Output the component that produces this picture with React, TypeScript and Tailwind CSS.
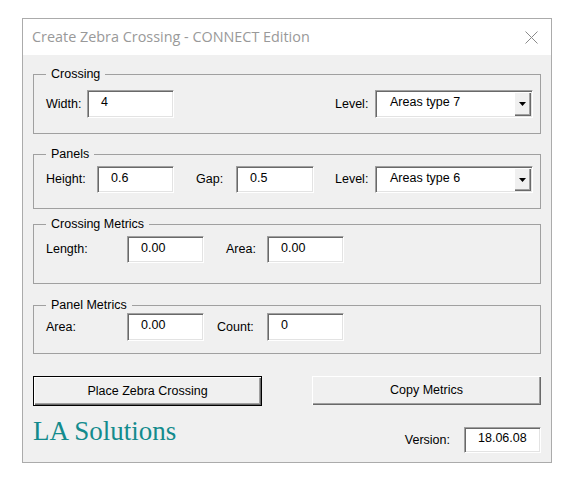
import React from 'react';

// Win32-style sunken edit box
const Field: React.FC<{ value: string; w: string; h?: string }> = ({ value, w, h = 'h-[27px]' }) => (
    <div
        className={`${w} ${h} flex items-center pb-[3px] pl-[13px] bg-white border border-t-[#a0a0a0] border-l-[#a0a0a0] border-r-white border-b-white shadow-[inset_1px_1px_0_#696969,inset_-1px_-1px_0_#e3e3e3]`}
    >
        {value}
    </div>
);

const Combo: React.FC<{ value: string; h?: string }> = ({ value, h = 'h-[27px]' }) => (
    <div
        className={`w-[158px] ${h} flex items-stretch bg-white border border-t-[#a0a0a0] border-l-[#a0a0a0] border-r-white border-b-white shadow-[inset_1px_1px_0_#696969,inset_-1px_-1px_0_#e3e3e3]`}
    >
        <div className="flex-1 flex items-center pb-[3px] pl-[14px]">{value}</div>
        <div className="w-[17px] mt-[1px] mb-[1px] mr-[1px] flex items-center justify-center bg-[#f0f0f0] shadow-[inset_1px_1px_0_#fff,inset_-1px_-1px_0_#696969,inset_-2px_-2px_0_#a0a0a0]">
            <svg width="7" height="4" viewBox="0 0 7 4">
                <polygon points="0,0 7,0 3.5,4" fill="#000" />
            </svg>
        </div>
    </div>
);

const Group: React.FC<{ title: string; className: string; children: React.ReactNode }> = ({ title, className, children }) => (
    <fieldset className={`min-w-0 border border-[#a0a0a0] pl-[12px] pr-[7px] ${className}`}>
        <legend className="px-[5px] leading-[14px]">{title}</legend>
        {children}
    </fieldset>
);

const raised = 'bg-[#f0f0f0] shadow-[inset_1px_1px_0_#fff,inset_-1px_-1px_0_#696969,inset_-2px_-2px_0_#a0a0a0]';

export default function App() {
    return (
        <div className="min-h-screen bg-white pt-[18px] pl-[22px] text-[12.5px] text-black font-['Liberation_Sans',Arial,sans-serif]">
            <div className="w-[530px] border border-[#ababab] bg-[#f0f0f0]">
                {/* title bar */}
                <div className="h-[36px] bg-white flex items-center justify-between pl-[9px] pr-[13px]">
                    <span className="font-['Open_Sans',sans-serif] text-[14.4px] text-[#999999]">
                        Create Zebra Crossing - CONNECT Edition
                    </span>
                    <svg width="13" height="13" viewBox="0 0 13 13" className="mt-[1px]">
                        <path d="M0.5 0.5 L12.5 12.5 M12.5 0.5 L0.5 12.5" stroke="#8a8a8a" strokeWidth="1" />
                    </svg>
                </div>

                {/* body */}
                <div className="h-[407px] px-[10px] pt-[12px]">
                    <Group title="Crossing" className="pt-[9px] pb-[15px]">
                        <div className="flex items-center h-[28px]">
                            <span className="w-[41px]">Width:</span>
                            <Field value="4" w="w-[87px]" h="h-[28px]" />
                            <span className="ml-[161px] w-[40px]">Level:</span>
                            <Combo value="Areas type 7" h="h-[28px]" />
                        </div>
                    </Group>

                    <Group title="Panels" className="mt-[13px] pt-[5px] pb-[15px]">
                        <div className="flex items-center h-[27px]">
                            <span className="w-[51px]">Height:</span>
                            <Field value="0.6" w="w-[77px]" />
                            <span className="ml-[22px] w-[40px]">Gap:</span>
                            <Field value="0.5" w="w-[78px]" />
                            <span className="ml-[21px] w-[40px]">Level:</span>
                            <Combo value="Areas type 6" />
                        </div>
                    </Group>

                    <Group title="Crossing Metrics" className="mt-[8px] pt-[5px] pb-[20px]">
                        <div className="flex items-center h-[27px]">
                            <span className="w-[81px]">Length:</span>
                            <Field value="0.00" w="w-[77px]" />
                            <span className="ml-[22px] w-[41px]">Area:</span>
                            <Field value="0.00" w="w-[77px]" />
                        </div>
                    </Group>

                    <Group title="Panel Metrics" className="mt-[14px] pt-[1px] pb-[12px]">
                        <div className="flex items-center h-[28px]">
                            <span className="w-[81px]">Area:</span>
                            <Field value="0.00" w="w-[77px]" h="h-[28px]" />
                            <span className="ml-[13px] w-[50px]">Count:</span>
                            <Field value="0" w="w-[77px]" h="h-[28px]" />
                        </div>
                    </Group>

                    <div className="mt-[22px] flex gap-[50px]">
                        <button className={`w-[230px] h-[30px] border border-black ${raised}`}>Place Zebra Crossing</button>
                        <button className={`w-[230px] h-[29px] ${raised}`}>Copy Metrics</button>
                    </div>

                    <div className="mt-[10px] flex items-start justify-between">
                        <span className="font-['Liberation_Serif','Times_New_Roman',serif] text-[27px] leading-[30px] text-[#138b8d]">
                            LA Solutions
                        </span>
                        <div className="mt-[11px] flex items-center">
                            <span className="mr-[14px]">Version:</span>
                            <Field value="18.06.08" w="w-[77px]" h="h-[26px]" />
                        </div>
                    </div>
                </div>
            </div>
        </div>
    );
}
